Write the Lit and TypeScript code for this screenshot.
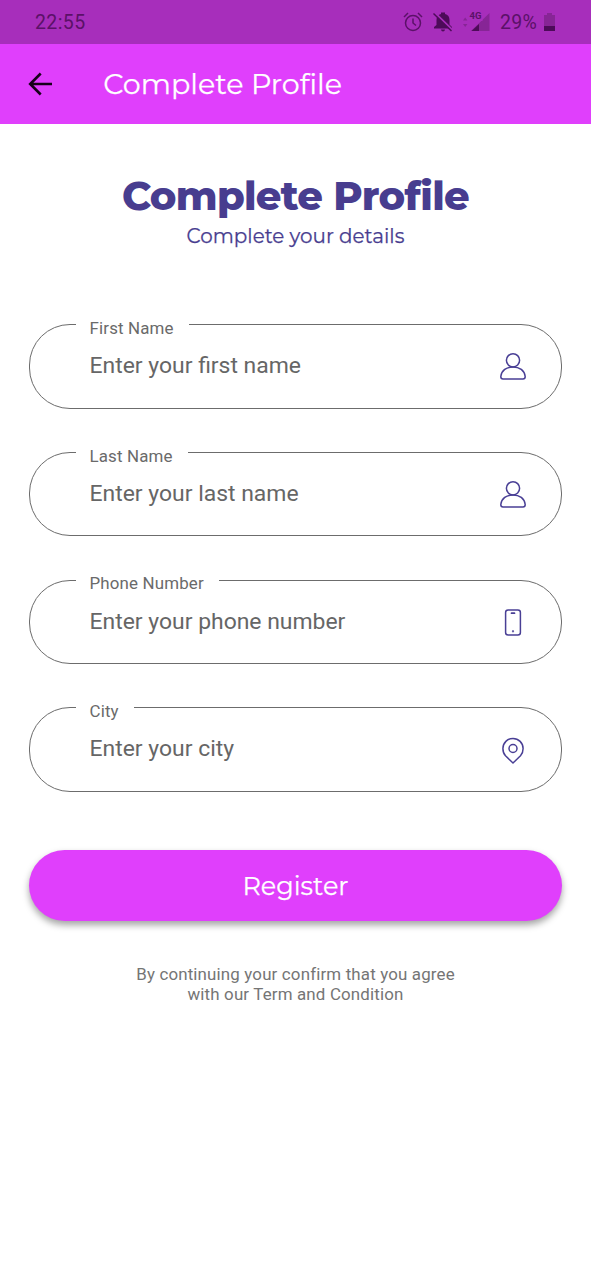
import { LitElement, html, svg, css } from "lit";
import { customElement, property } from "lit/decorators.js";

const icons: Record<string, unknown> = {
  user: svg`<circle cx="14" cy="8.3" r="6.6"/><path d="M4 27H24Q26.200 27 26.200 24.500C25.500 18.500 20.500 14.900 14 14.900S2.500 18.500 1.800 24.500Q1.800 27 4 27Z"/>`,
  phone: svg`<rect x="6.600" y="2" width="14.800" height="25" rx="2.500"/><path d="M12.500 5.200h3" stroke-width="1.700"/><circle cx="14" cy="23.300" r=".4"/>`,
  pin: svg`<path d="M14 27L6.500 19.800C4.800 18 3.900 15.500 3.900 12.500a10.100 10.100 0 0 1 20.200 0C24.100 15.500 23.200 18 21.500 19.800Z"/><circle cx="14" cy="12.500" r="4"/>`,
};

@customElement("profile-field")
class ProfileField extends LitElement {
  @property() label = "";
  @property() hint = "";
  @property() icon = "user";
  static styles = css`
    :host { display: block; height: 84.400px; }
    .box { position: relative; box-sizing: border-box; height: 100%; border: 1.500px solid #6c6c6c; border-radius: 41px;
      display: flex; align-items: center; justify-content: space-between; padding: 0 34px 0 59.500px; }
    .label { position: absolute; left: 46px; top: -8.300px; padding: 0 15.500px 0 13.500px; background: #fff;
      font-size: 16.900px; line-height: 22px; color: #6a6a6a; letter-spacing: .16px; white-space: nowrap; }
    .hint { font-size: 22.930px; line-height: 28px; color: #666; white-space: nowrap; padding-bottom: .6px; }
    svg { width: 28px; height: 28px; fill: none; stroke: #493f95; stroke-width: 1.500; stroke-linejoin: round; stroke-linecap: round; flex: none; }
  `;
  render() {
    return html`<div class="box"><span class="label">${this.label}</span><span class="hint">${this.hint}</span>
      <svg viewBox="0 0 28 28">${icons[this.icon]}</svg></div>`;
  }
}

@customElement("app-root")
class AppRoot extends LitElement {
  static styles = css`
    :host { display: block; min-height: 1280px; background: #fff; font-family: Roboto, sans-serif; overflow: hidden; }
    .status { height: 44px; box-sizing: border-box; background: #a72ebb; color: #5b1168; display: flex; align-items: center;
      justify-content: space-between; padding: 0 34px 0 35px; font-size: 19.500px; letter-spacing: .4px; }
    .icons { display: flex; align-items: center; width: 154px; }
    .icons svg { flex: none; display: block; }
    .bell { margin-left: 9px; }
    .signal { margin-left: 8px; }
    .pct { margin: 0 3px 0 10px; width: 41px; white-space: nowrap; letter-spacing: .3px; }
    .bar { height: 80px; background: #e03ffc; display: flex; align-items: center; padding-left: 28px; }
    .bar svg { width: 25px; height: 26px; margin-right: 50.300px; }
    .brand { font-family: Montserrat, sans-serif; white-space: nowrap; -webkit-text-stroke: .25px currentColor; }
    .title { color: #fff; font-size: 28.500px; line-height: 34px; }
    .intro { display: flex; flex-direction: column; align-items: center; padding-top: 48px; color: #483d8f; }
    h1.brand { margin: 0; font-size: 40px; line-height: 48px; font-weight: 800; letter-spacing: -.7px; -webkit-text-stroke: 0; }
    .sub { font-size: 19.900px; line-height: 26px; margin-top: 3px; }
    .form { display: flex; flex-direction: column; gap: 43.300px; padding: 75.300px 29px 0; }
    .register { margin: 58.200px 29px 0; height: 71.500px; border-radius: 36px; background: #e03ffc; color: #fff;
      display: flex; align-items: center; justify-content: center; box-shadow: 0 4px 7px rgba(0,0,0,.36); }
    .register span { font-size: 25.500px; line-height: 32px; }
    .terms { margin: 42.500px 0 0; text-align: center; color: #757575; font-size: 16.900px; line-height: 20.500px; letter-spacing: .16px; }
  `;
  render() {
    return html`
      <div class="status"><span>22:55</span>
        <div class="icons">
          <svg width="20" height="22" viewBox="0 0 20 22" fill="none" stroke="#5b1168" stroke-width="1.500"><circle cx="10" cy="12" r="7.500"/><path d="M10 7.500V12l3 2.500M1 6l4-4M19 6l-4-4"/></svg>
          <svg class="bell" width="22" height="22" viewBox="0 0 22 22"><path fill="#4d0b59" d="M2 17.500v-1.500l2.500-2V9q0-5 4.500-6V1.500h4V3Q17.500 4 17.500 9v4.500l2.500 2.500V17.500ZM9 18.500h4q-.2 2-2 2t-2-2Z"/><path d="M2.500 1.500l17.500 17" stroke="#a72ebb" stroke-width="2"/><path d="M1.500 2.500l18 17.500" stroke="#4d0b59" stroke-width="1.500"/></svg>
          <svg class="signal" width="28" height="24" viewBox="0 0 28 24"><path fill="#872596" d="M1 10.500l2.200-3 2.200 3ZM1 14l2.200 3 2.200-3Z"/><path fill="#872596" d="M9 21L27.500 3v18Z"/><path fill="#a72ebb" d="M6 1h14.500v10H6Z"/><path fill="#4d0b59" d="M9.500 21l7.500-7v7Z"/><text x="7.500" y="9" font-family="Roboto" font-size="9.500" font-weight="700" letter-spacing="0" fill="#5b1168">4G</text></svg>
          <span class="pct">29%</span>
          <svg width="11" height="20" viewBox="0 0 11 20"><path fill="#872596" d="M0 3h3V1h5v2h3v13H0Z"/><path fill="#4d0b59" d="M0 14h11v5H0Z"/></svg>
        </div>
      </div>
      <div class="bar">
        <svg viewBox="0 0 25 26" fill="none" stroke="#160019" stroke-width="2.600"><path d="M24 13H3M12.700 2.500L2.200 13l10.500 10.500"/></svg>
        <span class="brand title">Complete Profile</span>
      </div>
      <div class="intro"><h1 class="brand">Complete Profile</h1><span class="brand sub">Complete your details</span></div>
      <div class="form">
        <profile-field label="First Name" hint="Enter your first name"></profile-field>
        <profile-field label="Last Name" hint="Enter your last name"></profile-field>
        <profile-field label="Phone Number" hint="Enter your phone number" icon="phone"></profile-field>
        <profile-field label="City" hint="Enter your city" icon="pin"></profile-field>
      </div>
      <div class="register"><span class="brand">Register</span></div>
      <p class="terms">By continuing your confirm that you agree<br>with our Term and Condition</p>`;
  }
}
